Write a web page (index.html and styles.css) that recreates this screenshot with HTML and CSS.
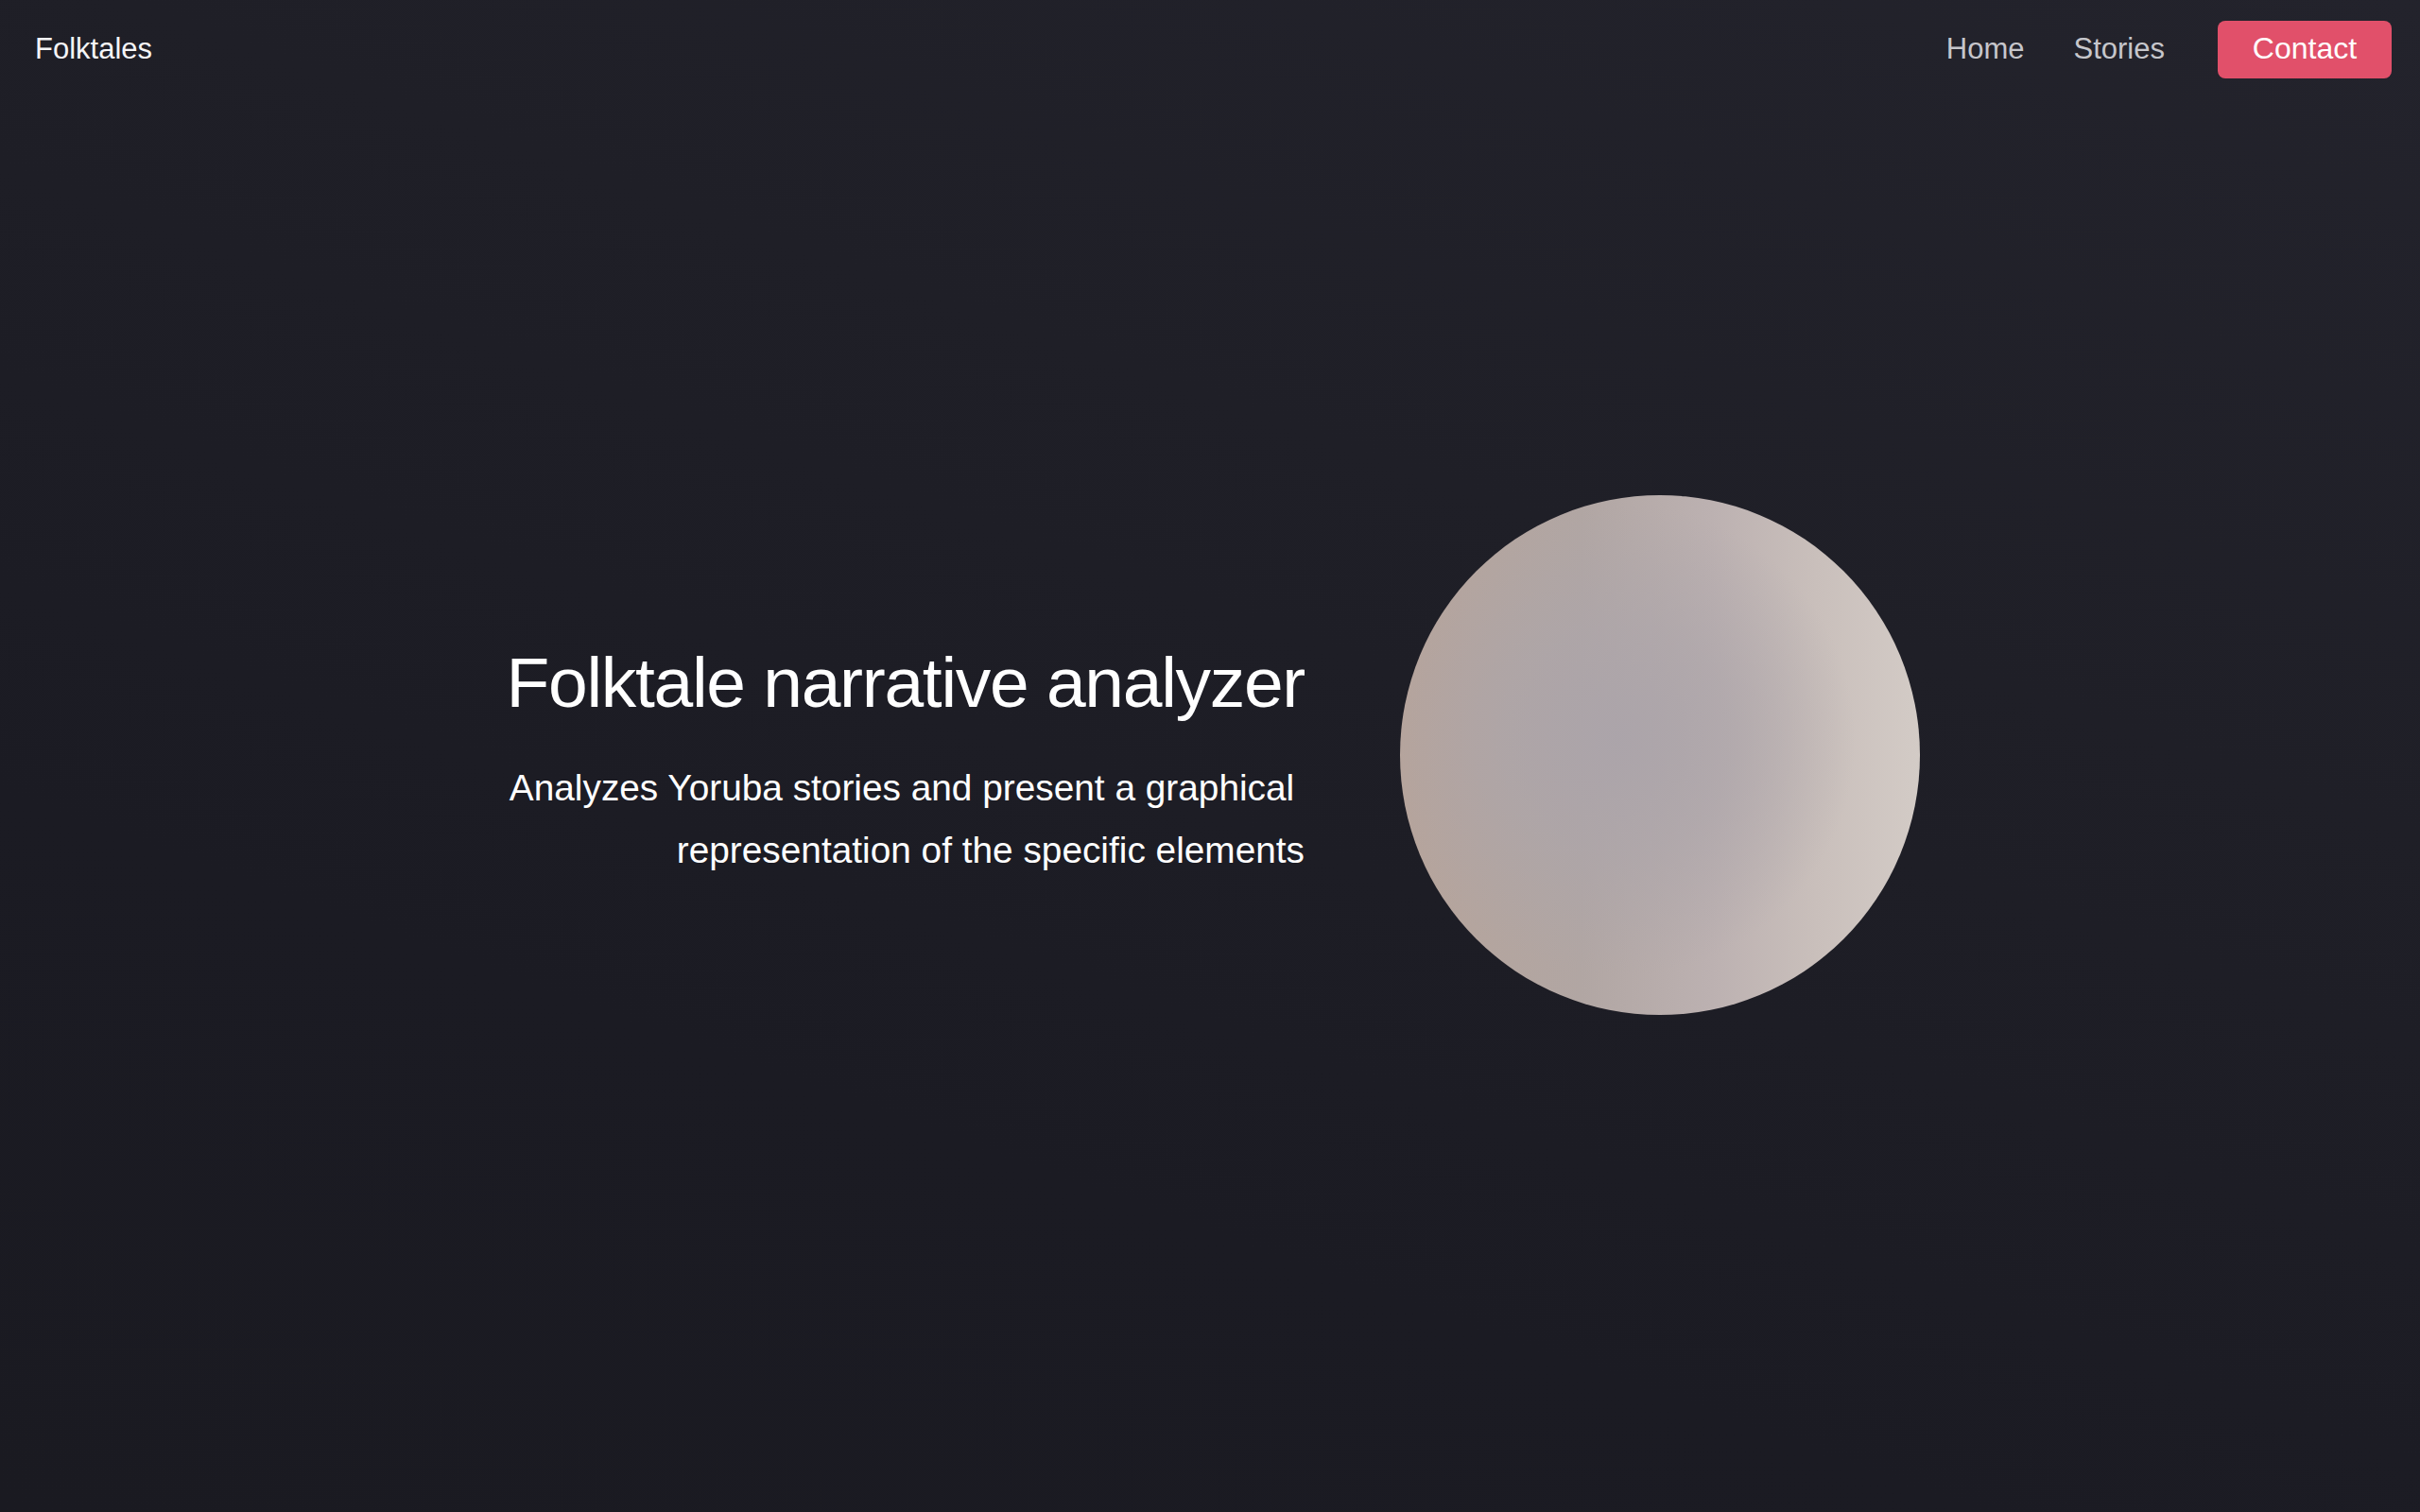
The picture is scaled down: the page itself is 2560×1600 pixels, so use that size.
FILE: index.html
```html
<!DOCTYPE html>
<html lang="en">
<head>
<meta charset="utf-8">
<title>Folktales</title>
<link rel="stylesheet" href="styles.css">
</head>
<body>
<header class="topbar">
  <a class="brand" href="#">Folktales</a>
  <nav class="menu">
    <a class="menu-link home" href="#">Home</a>
    <a class="menu-link stories" href="#">Stories</a>
    <a class="contact-btn" href="#">Contact</a>
  </nav>
</header>
<main class="hero">
  <div class="hero-text">
    <h1 class="hero-title">Folktale narrative analyzer</h1>
    <p class="hero-sub">Analyzes Yoruba stories and present a graphical&nbsp;<br>representation of the specific elements</p>
  </div>
  <div class="orb"></div>
</main>
</body>
</html>
```
FILE: styles.css
```css
html, body {
  margin: 0;
  padding: 0;
}
body {
  min-height: 100vh;
  font-family: "Liberation Sans", Arial, Helvetica, sans-serif;
  color: #ffffff;
  background: linear-gradient(200deg, #23232c 0%, #1f1f27 35%, #1b1b23 70%, #1a1a21 100%);
  background-attachment: fixed;
}
a {
  text-decoration: none;
}
.topbar {
  display: flex;
  align-items: center;
  justify-content: space-between;
  height: 105px;
  box-sizing: border-box;
  padding: 0 30px 0 37px;
}
.brand {
  color: #f5f5f7;
  font-size: 31px;
  line-height: 1;
  margin-top: -2px;
}
.menu {
  display: flex;
  align-items: center;
}
.menu-link {
  color: #c6c6cb;
  font-size: 31px;
  line-height: 1;
  margin-top: -2px;
}
.home {
  margin-right: 52px;
}
.stories {
  margin-right: 56px;
}
.contact-btn {
  display: flex;
  align-items: center;
  justify-content: center;
  box-sizing: border-box;
  width: 184px;
  height: 61px;
  background: #e1506a;
  border-radius: 8px;
  color: #ffffff;
  font-size: 32px;
  padding-bottom: 2px;
}
.hero {
  display: flex;
  align-items: flex-start;
  justify-content: center;
  padding: 419px 0 0 6px;
  gap: 101px;
}
.hero-text {
  width: 845px;
  margin-top: 153px;
  text-align: right;
}
.hero-title {
  margin: 0;
  font-size: 75px;
  line-height: 90px;
  font-weight: 400;
  letter-spacing: -1.3px;
  white-space: nowrap;
}
.hero-sub {
  margin: 34px 0 0 0;
  font-size: 38.8px;
  line-height: 66px;
  white-space: nowrap;
}
.orb {
  flex: 0 0 auto;
  width: 550px;
  height: 550px;
  border-radius: 50%;
  background:
    radial-gradient(circle at 42% 47%, rgba(171, 164, 170, 0.95) 0%, rgba(172, 165, 170, 0.65) 28%, rgba(172, 165, 170, 0) 58%),
    linear-gradient(90deg, #b6a49b 0%, #b1a6a3 35%, #bcb1b1 60%, #c9bfbb 80%, #d3cbc6 100%);
}
```
